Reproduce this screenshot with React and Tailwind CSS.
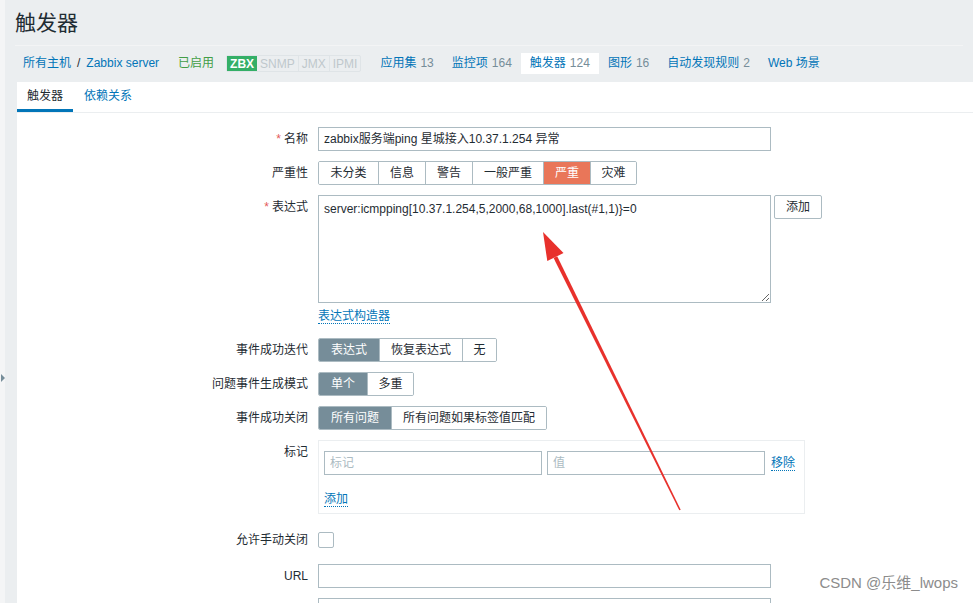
const font = { fontFamily: '"Liberation Sans", Arial, "Noto Sans CJK SC", sans-serif' };

function Label({ children, req }) {
    return (
        <div className="w-[301px] shrink-0 pr-[10px] text-right text-[12px] text-[#1f2c33] leading-[24px]">
            {req && <span className="text-[#e45959] mr-[3px]">*</span>}
            {children}
        </div>
    );
}

function Seg({ items, active, widths, activeBg = 'bg-[#768d99]' }) {
    return (
        <div className="flex h-[24px] border border-[#acbbc2] rounded-[2px] overflow-hidden">
            {items.map((t, i) => (
                <div
                    key={t}
                    className={`flex items-center justify-center text-[12px] ${i > 0 ? 'border-l border-[#acbbc2]' : ''} ${i === active ? `${activeBg} text-white` : 'bg-white text-[#1f2c33]'}`}
                    style={{ width: widths[i] }}
                >
                    {t}
                </div>
            ))}
        </div>
    );
}

function NavItem({ name, count, current }) {
    return (
        <div className={`h-[21px] px-[9px] flex items-center text-[12px] ${current ? 'bg-white' : ''}`}>
            <span className="text-[#0275b8]">{name}</span>
            {count && <span className="text-[#768d99] ml-[4px]">{count}</span>}
        </div>
    );
}

export default function App() {
    return (
        <div className="relative w-[973px] h-[603px] overflow-hidden bg-[#ebeef0] flex" style={font}>
            {/* left collapsed sidebar */}
            <div className="w-[5px] shrink-0 bg-[#f4f5f6] relative">
                <div className="absolute left-[1px] top-[374px] w-0 h-0 border-y-[4px] border-y-transparent border-l-[4px] border-l-[#768d99]" />
            </div>
            <div className="flex-1 flex flex-col min-h-0">
                <div className="h-[45px] shrink-0 pl-[10px] flex items-center text-[21px] text-[#1f2c33]">触发器</div>
                <div className="h-[1px] shrink-0 mx-[10px] bg-[#f3f4f5]" />
                <div className="h-[34px] shrink-0 pl-[18px] flex items-center">
                    <div className="flex items-center text-[12px] pr-[10px]">
                        <span className="text-[#0275b8]">所有主机</span>
                        <span className="mx-[6px] text-[#1f2c33]">/</span>
                        <span className="text-[#0275b8]">Zabbix server</span>
                    </div>
                    <span className="text-[12px] text-[#429e47] ml-[9px] mr-[12px]">已启用</span>
                    <div className="flex h-[17px] text-[12px] leading-[17px] border border-[#dfe4e7] rounded-[2px] mr-[10px]">
                        <span className="bg-[#34af67] text-white font-bold px-[3px]">ZBX</span>
                        <span className="text-[#bfc8cc] px-[3px] border-r border-[#dfe4e7]">SNMP</span>
                        <span className="text-[#bfc8cc] px-[3px] border-r border-[#dfe4e7]">JMX</span>
                        <span className="text-[#bfc8cc] px-[3px]">IPMI</span>
                    </div>
                    <NavItem name="应用集" count="13" />
                    <NavItem name="监控项" count="164" />
                    <NavItem name="触发器" count="124" current />
                    <NavItem name="图形" count="16" />
                    <NavItem name="自动发现规则" count="2" />
                    <NavItem name="Web 场景" />
                </div>
                <div className="h-[2px] shrink-0" />
                <div className="flex-1 min-h-0 ml-[12px] bg-white flex flex-col overflow-hidden">
                    <div className="h-[31px] shrink-0 flex items-end border-b border-[#ebeef0]">
                        <div className="w-[56px] h-[31px] flex items-center justify-center text-[12px] text-[#1f2c33] border-b-[3px] border-[#0275b8] pt-[2px]">触发器</div>
                        <div className="h-[31px] px-[11px] flex items-center text-[12px] text-[#0275b8] pb-[1px]">依赖关系</div>
                    </div>

                    <div className="pt-[14px] flex flex-col shrink-0">
                        <div className="flex">
                            <Label req>名称</Label>
                            <div className="w-[453px] h-[24px] border border-[#acbbc2] px-[5px] flex items-center text-[12px] text-[#1f2c33]">
                                zabbix服务端ping 星城接入10.37.1.254 异常
                            </div>
                        </div>

                        <div className="flex mt-[10px]">
                            <Label>严重性</Label>
                            <Seg
                                items={['未分类', '信息', '警告', '一般严重', '严重', '灾难']}
                                widths={[59, 47, 47, 71, 47, 46]}
                                active={4}
                                activeBg="bg-[#e97659]"
                            />
                        </div>

                        <div className="flex mt-[10px]">
                            <Label req>表达式</Label>
                            <textarea
                                readOnly
                                className="w-[453px] h-[108px] border border-[#acbbc2] px-[5px] py-[4px] text-[12px] text-[#1f2c33] outline-none resize"
                                style={font}
                                defaultValue="server:icmpping[10.37.1.254,5,2000,68,1000].last(#1,1)}=0"
                            />
                            <div className="ml-[3px] w-[48px] h-[24px] border border-[#acbbc2] rounded-[2px] flex items-center justify-center text-[12px] text-[#1f2c33]">添加</div>
                        </div>

                        <div className="flex mt-[6px]">
                            <Label />
                            <span className="text-[12px] text-[#0275b8] border-b border-dotted border-[#0275b8] leading-[14px] h-[15px]">表达式构造器</span>
                        </div>

                        <div className="flex mt-[14px]">
                            <Label>事件成功迭代</Label>
                            <Seg items={['表达式', '恢复表达式', '无']} widths={[60, 83, 34]} active={0} />
                        </div>

                        <div className="flex mt-[10px]">
                            <Label>问题事件生成模式</Label>
                            <Seg items={['单个', '多重']} widths={[48, 46]} active={0} />
                        </div>

                        <div className="flex mt-[10px]">
                            <Label>事件成功关闭</Label>
                            <Seg items={['所有问题', '所有问题如果标签值匹配']} widths={[72, 155]} active={0} />
                        </div>

                        <div className="flex mt-[10px]">
                            <Label>标记</Label>
                            <div className="w-[487px] h-[74px] border border-[#ebeef0] px-[5px] pt-[10px]">
                                <div className="flex items-center">
                                    <div className="w-[218px] h-[24px] border border-[#acbbc2] px-[5px] flex items-center text-[12px] text-[#acbbc2]">标记</div>
                                    <div className="ml-[5px] w-[218px] h-[24px] border border-[#acbbc2] px-[5px] flex items-center text-[12px] text-[#acbbc2]">值</div>
                                    <span className="ml-[6px] text-[12px] text-[#0275b8] border-b border-dotted border-[#0275b8] leading-[14px]">移除</span>
                                </div>
                                <div className="mt-[11px]">
                                    <span className="text-[12px] text-[#0275b8] border-b border-dotted border-[#0275b8] leading-[14px]">添加</span>
                                </div>
                            </div>
                        </div>

                        <div className="flex mt-[14px] items-center">
                            <Label>允许手动关闭</Label>
                            <div className="w-[16px] h-[16px] border border-[#acbbc2] rounded-[2px]" />
                        </div>

                        <div className="flex mt-[12px]">
                            <Label>URL</Label>
                            <div className="w-[453px] h-[24px] border border-[#acbbc2]" />
                        </div>

                        <div className="flex mt-[10px]">
                            <Label />
                            <div className="w-[453px] h-[24px] border border-[#acbbc2]" />
                        </div>
                    </div>
                </div>
            </div>

            {/* red annotation arrow */}
            <svg className="absolute inset-0 pointer-events-none" width="973" height="603">
                <polygon points="557.2,256.2 680.7,509.7 679.3,510.3 553.6,258.0" fill="#e8312c" />
                <polygon points="543,232 563.5,253.1 555.4,257.1 547.3,261.1" fill="#e8312c" />
            </svg>

            <div className="absolute right-[15px] bottom-[9px] text-[15px] text-[#8c8c8c]" style={{ fontFamily: '"Liberation Sans", "Noto Sans CJK SC", sans-serif' }}>
                CSDN @乐维_lwops
            </div>
        </div>
    );
}
